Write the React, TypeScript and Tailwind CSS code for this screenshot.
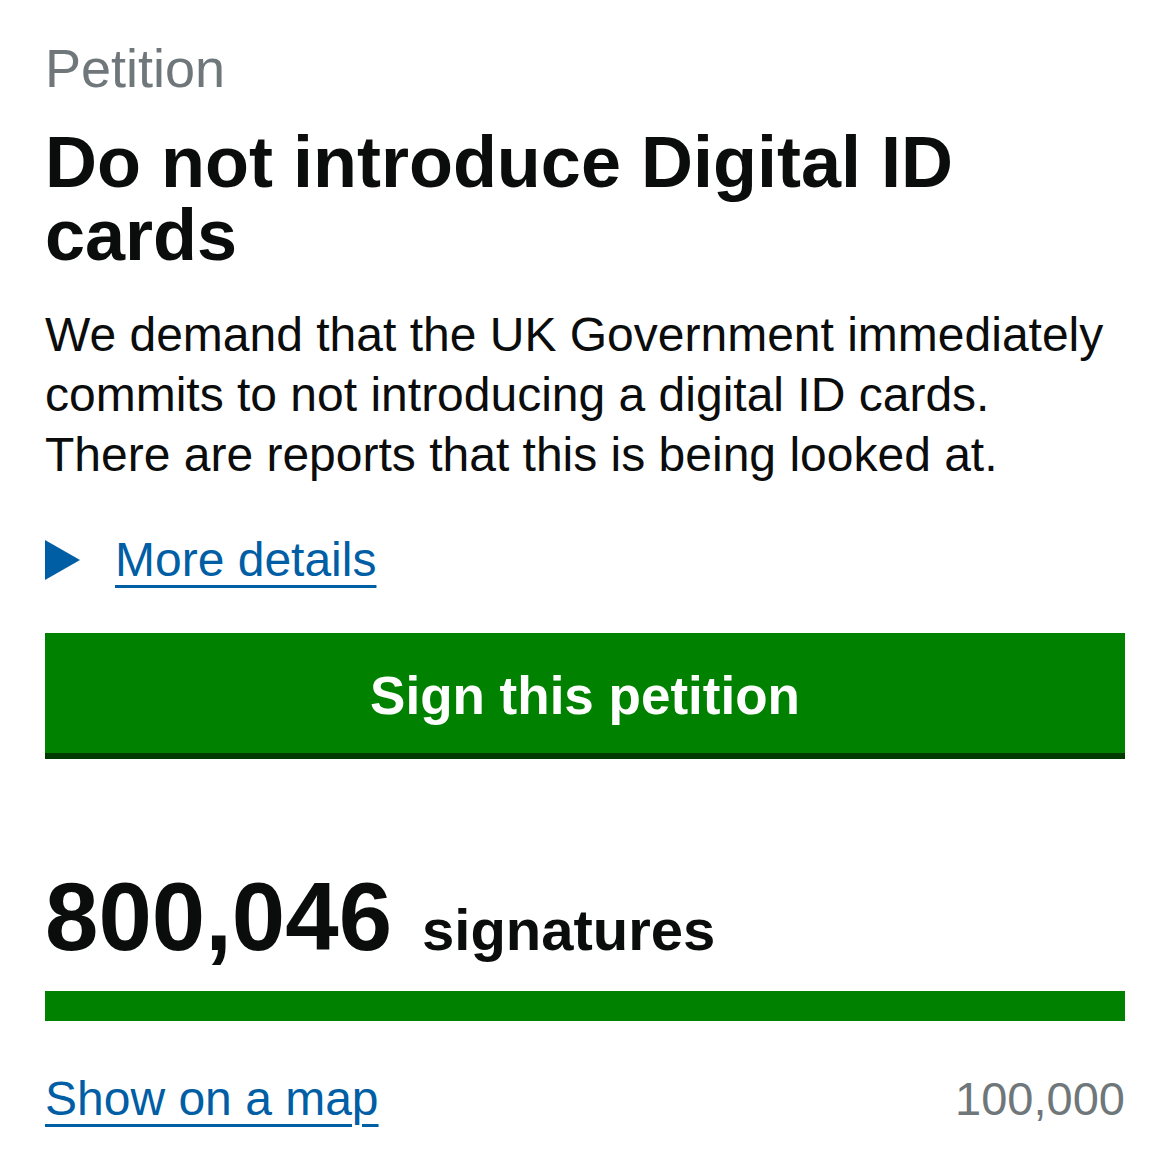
export default function App() {
  return (
    <div className="min-h-[1170px] w-[1170px] bg-white px-[45px] pt-[38px] text-[#0b0c0c]" style={{ fontFamily: '"Liberation Sans", Arial, sans-serif' }}>
      <div className="text-[54px] leading-[60px] text-[#6f777b]">Petition</div>
      <h1 className="mt-[28px] text-[72px] font-bold leading-[73px]">Do not introduce Digital ID cards</h1>
      <p className="mt-[33px] text-[48px] leading-[60px]">
        We demand that the UK Government immediately commits to not introducing a digital ID cards.
        <br />
        There are reports that this is being looked at.
      </p>
      <div className="mt-[45px] flex items-center text-[48px] leading-[60px]">
        <svg width="35" height="40" viewBox="0 0 35 40" className="mr-[35px] shrink-0">
          <polygon points="0,0 35,20 0,40" fill="#005ea5" />
        </svg>
        <a href="#" className="text-[#005ea5] underline decoration-[3px] underline-offset-[9px]">More details</a>
      </div>
      <button className="mt-[43px] flex h-[120px] w-full items-center justify-center bg-[#008200] pt-[5px] text-[53px] font-bold leading-[60px] text-white shadow-[0_6px_0_#003a00]">
        Sign this petition
      </button>
      <div className="mt-[116px] flex items-baseline">
        <span className="text-[96px] font-bold leading-[96px]">800,046</span>
        <span className="ml-[30px] text-[58px] font-bold leading-[60px]">signatures</span>
      </div>
      <div className="mt-[26px] h-[30px] w-full bg-[#008200]" />
      <div className="mt-[48px] flex items-baseline justify-between leading-[60px]">
        <a href="#" className="text-[48px] text-[#005ea5] underline decoration-[3px] underline-offset-[9px]">Show on a map</a>
        <span className="text-[47px] text-[#6f777b]">100,000</span>
      </div>
    </div>
  );
}
